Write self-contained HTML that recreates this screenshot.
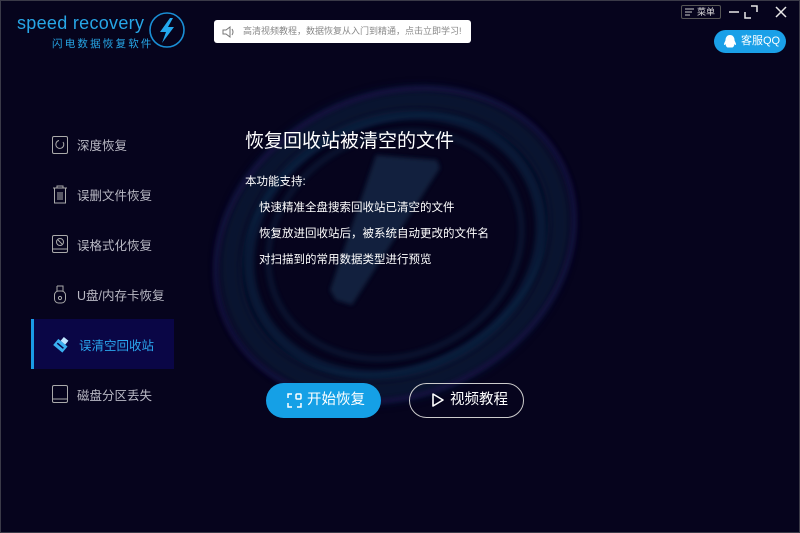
<!DOCTYPE html>
<html><head><meta charset="utf-8"><style>
*{margin:0;padding:0;box-sizing:border-box}
body{width:800px;height:533px;background:#06041d;overflow:hidden;position:relative;font-family:"Liberation Sans","Noto Sans CJK SC",sans-serif}
.abs{position:absolute}
.nav{position:absolute;left:52px;display:flex;align-items:center;color:#b9b9c4;font-size:12.5px;white-space:nowrap}
.nav svg{margin-right:9px}
</style></head><body>
<div class="abs" style="left:0;top:0;width:800px;height:533px;border:1px solid #3a3a48"></div>
<svg class="abs" style="left:0;top:0" width="800" height="533">
<defs>
<filter id="b1"><feGaussianBlur stdDeviation="5"/></filter>
<filter id="b2"><feGaussianBlur stdDeviation="2"/></filter>
</defs>
<g transform="translate(395,245) rotate(-25)" fill="none">
<ellipse rx="170" ry="140" stroke="#0b2340" stroke-width="24" filter="url(#b1)" opacity=".55"/>
<ellipse rx="150" ry="125" stroke="#0f2f50" stroke-width="10" filter="url(#b2)" opacity=".5"/>
<ellipse rx="185" ry="150" stroke="#1a1650" stroke-width="5" filter="url(#b2)" opacity=".6"/>
<ellipse rx="130" ry="110" stroke="#0c2644" stroke-width="6" filter="url(#b2)" opacity=".45"/>
<ellipse rx="160" ry="122" stroke="#1f5a80" stroke-width="1" opacity=".3" filter="url(#b2)"/>
</g>
<polygon points="376,155 437,160 440,168 352,305 336,300 330,290" fill="#122c48" opacity=".75" filter="url(#b2)"/>
</svg>

<!-- logo -->
<div class="abs" style="left:17px;top:13px;color:#27a6e6;font-size:18px;letter-spacing:0.3px;font-family:'Liberation Sans',sans-serif">speed recovery</div>
<div class="abs" style="left:52px;top:36px;color:#27a6e6;font-size:10.5px;letter-spacing:2.2px;white-space:nowrap">闪电数据恢复软件</div>
<svg class="abs" style="left:147px;top:10px" width="40" height="40"><circle cx="20" cy="20" r="17" fill="none" stroke="#1a8fd6" stroke-width="1.6"/><polygon points="23,8 13,22 19,22 15,33 27,17 21,17 26,8" fill="#24a8ee"/></svg>

<div class="abs" style="left:214px;top:20px;width:257px;height:23px;background:#fff;border-radius:3px;font-size:9px;color:#888;line-height:23px;padding-left:29px;white-space:nowrap;overflow:hidden">高清视频教程，数据恢复从入门到精通，点击立即学习!</div>
<svg class="abs" style="left:221px;top:25px" width="16" height="14"><path d="M2 5h3l4-3v10l-4-3H2z M11 4q2 3 0 6" fill="none" stroke="#777" stroke-width="1"/></svg>

<!-- top right -->
<div class="abs" style="left:681px;top:5px;width:40px;height:14px;border:1px solid #555;border-radius:2px;font-size:9px;color:#ddd;line-height:12px;padding-left:15px">菜单</div>
<svg class="abs" style="left:684px;top:8px" width="12" height="9"><path d="M1 1h9M1 4h7M1 7h5" stroke="#ccc" stroke-width="1"/></svg>
<svg class="abs" style="left:728px;top:4px" width="70" height="16" stroke="#e8e8e8" stroke-width="1.5" fill="none"><path d="M1 8h10"/><path d="M23 2h6v6M23 14h-6v-6"/><path d="M48 3l10 10M58 3l-10 10"/></svg>
<div class="abs" style="left:714px;top:30px;width:72px;height:23px;background:#1aa0e8;border-radius:12px;color:#fff;font-size:11px;line-height:23px;padding-left:27px">客服QQ</div>
<svg class="abs" style="left:722px;top:34px" width="16" height="16"><path d="M8 1c3 0 4.5 2.5 4.5 5 0 1 1 2 1.5 4 .3 1.5-1 1-1.5 0-.3 2-1 3-2 3.5h-5c-1-.5-1.7-1.5-2-3.5-.5 1-1.8 1.5-1.5 0 .5-2 1.5-3 1.5-4C3.5 3.5 5 1 8 1z" fill="#fff"/></svg>

<!-- nav -->
<div class="abs" style="left:31px;top:319px;width:143px;height:50px;background:#0a0646;border-left:3px solid #1a9be6"></div>
<div class="nav" style="top:135px"><svg width="16" height="18"><rect x=".5" y=".5" width="15" height="17" rx="1.5" fill="none" stroke="#aaa"/><path d="M11 6a4 4 0 1 1-4-1.5" fill="none" stroke="#aaa"/></svg>深度恢复</div>
<div class="nav" style="top:185px"><svg width="16" height="19"><path d="M1 3h14M5 3V1h6v2M2.5 3v15h11V3M6 7v8M8 7v8M10 7v8" fill="none" stroke="#aaa"/></svg>误删文件恢复</div>
<div class="nav" style="top:235px"><svg width="16" height="19"><rect x=".5" y=".5" width="15" height="17" rx="1.5" fill="none" stroke="#aaa"/><path d="M1 14h14" stroke="#aaa"/><circle cx="8" cy="7" r="3.5" fill="none" stroke="#aaa"/><path d="M6 5l4 4" stroke="#aaa"/></svg>误格式化恢复</div>
<div class="nav" style="top:285px"><svg width="16" height="19"><path d="M5 1h6v5M5 1v5" fill="none" stroke="#aaa"/><rect x="2.5" y="6" width="11" height="12" rx="4" fill="none" stroke="#aaa"/><circle cx="8" cy="13" r="1.6" fill="none" stroke="#aaa"/></svg>U盘/内存卡恢复</div>
<div class="nav" style="top:335px;color:#2aa4ec"><svg width="18" height="18"><g transform="rotate(40 9 9)"><rect x="3" y="6" width="12" height="8" fill="#3ab0f0"/><rect x="6" y="1" width="6" height="5" fill="#bfe6ff"/><path d="M5 10h8" stroke="#0a0646" stroke-width="1.5"/></g></svg>误清空回收站</div>
<div class="nav" style="top:385px"><svg width="16" height="19"><rect x=".5" y=".5" width="15" height="17" rx="1.5" fill="none" stroke="#aaa"/><path d="M1 14h14" stroke="#aaa"/></svg>磁盘分区丢失</div>

<!-- content -->
<div class="abs" style="left:245px;top:126px;color:#fff;font-size:19px">恢复回收站被清空的文件</div>
<div class="abs" style="left:245px;top:173px;color:#fff;font-size:11.5px">本功能支持:</div>
<div class="abs" style="left:259px;top:195px;color:#fff;font-size:11.5px;line-height:26px">快速精准全盘搜索回收站已清空的文件<br>恢复放进回收站后，被系统自动更改的文件名<br>对扫描到的常用数据类型进行预览</div>

<div class="abs" style="left:266px;top:383px;width:115px;height:35px;background:#15a0e6;border-radius:18px;color:#fff;font-size:14.5px;line-height:35px;padding-left:41px">开始恢复</div>
<svg class="abs" style="left:287px;top:393px" width="15" height="15" fill="none" stroke="#fff" stroke-width="1.5"><path d="M1 5V1h4M1 10v4h4M10 14h4v-4"/><rect x="9" y="1" width="5" height="5" rx="1"/></svg>
<div class="abs" style="left:409px;top:383px;width:115px;height:35px;border:1px solid #ccc;border-radius:18px;color:#fff;font-size:14.5px;line-height:33px;padding-left:40px">视频教程</div>
<svg class="abs" style="left:431px;top:392px" width="14" height="16"><path d="M2 2l10 6-10 6z" fill="none" stroke="#fff" stroke-width="1.6" stroke-linejoin="round"/></svg>
</body></html>
